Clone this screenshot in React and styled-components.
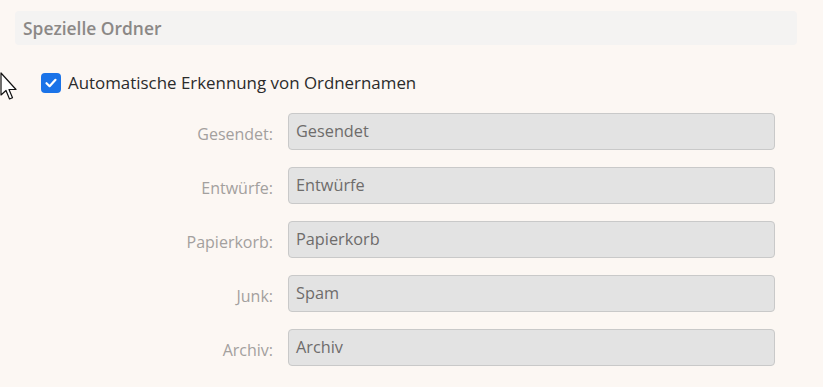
import React from "react";
import styled, { createGlobalStyle } from "styled-components";

const Global = createGlobalStyle`
  html, body { margin: 0; padding: 0; background: #fcf7f3; }
  body { font-family: "Open Sans", "Noto Sans", sans-serif; }
`;

const Page = styled.div`
  position: relative;
  width: 823px;
  height: 387px;
  box-sizing: border-box;
  padding: 11px 26px 0 15px;
  background: #fcf7f3;
  overflow: hidden;
`;

const SectionHeader = styled.div`
  height: 34px;
  box-sizing: border-box;
  padding: 0 8px 1px;
  display: flex;
  align-items: center;
  background: #f4f3f2;
  border-radius: 4px;
  color: #8b8886;
  font-weight: 600;
  font-size: 17.4px;
`;

const CheckRow = styled.label`
  display: flex;
  align-items: center;
  gap: 7px;
  margin: 26px 0 0 26px;
  font-size: 16.9px;
  color: #2b2b2b;
`;

const Box = styled.span`
  width: 20px;
  height: 20px;
  border-radius: 4px;
  background: #1a73e8;
  display: flex;
  align-items: center;
  justify-content: center;
`;

const Form = styled.div`
  display: grid;
  grid-template-columns: 258px 487px;
  column-gap: 15px;
  row-gap: 17px;
  margin-top: 19px;
  align-items: center;
`;

const Label = styled.div`
  text-align: right;
  color: #a3a09e;
  font-size: 16px;
  padding-top: 5px;
`;

const Field = styled.div`
  height: 37px;
  box-sizing: border-box;
  border: 1px solid #c9c9c9;
  border-radius: 4px;
  background: #e3e3e3;
  padding: 0 7px 1px;
  display: flex;
  align-items: center;
  color: #6e6c6b;
  font-size: 16.3px;
`;

const Cursor = styled.svg`
  position: absolute;
  left: 0;
  top: 72px;
`;

const rows = [
  ["Gesendet:", "Gesendet"],
  ["Entwürfe:", "Entwürfe"],
  ["Papierkorb:", "Papierkorb"],
  ["Junk:", "Spam"],
  ["Archiv:", "Archiv"],
];

export default function App() {
  return (
    <Page>
      <Global />
      <SectionHeader>Spezielle Ordner</SectionHeader>
      <CheckRow>
        <Box>
          <svg width="14" height="14" viewBox="0 0 14 14">
            <path d="M2.5 7.2 L5.6 10.2 L11.5 3.8" fill="none" stroke="#fff" strokeWidth="2.2" strokeLinecap="round" strokeLinejoin="round" />
          </svg>
        </Box>
        Automatische Erkennung von Ordnernamen
      </CheckRow>
      <Form>
        {rows.map(([l, v]) => (
          <React.Fragment key={l}>
            <Label>{l}</Label>
            <Field>{v}</Field>
          </React.Fragment>
        ))}
      </Form>
      <Cursor width="20" height="30" viewBox="0 0 20 30">
        <path d="M1 1 L1 23 L6 18.5 L9.5 27 L12.5 25.7 L9 17.5 L16 17.5 Z" fill="#fff" stroke="#111" strokeWidth="1.2" strokeLinejoin="round" />
      </Cursor>
    </Page>
  );
}
